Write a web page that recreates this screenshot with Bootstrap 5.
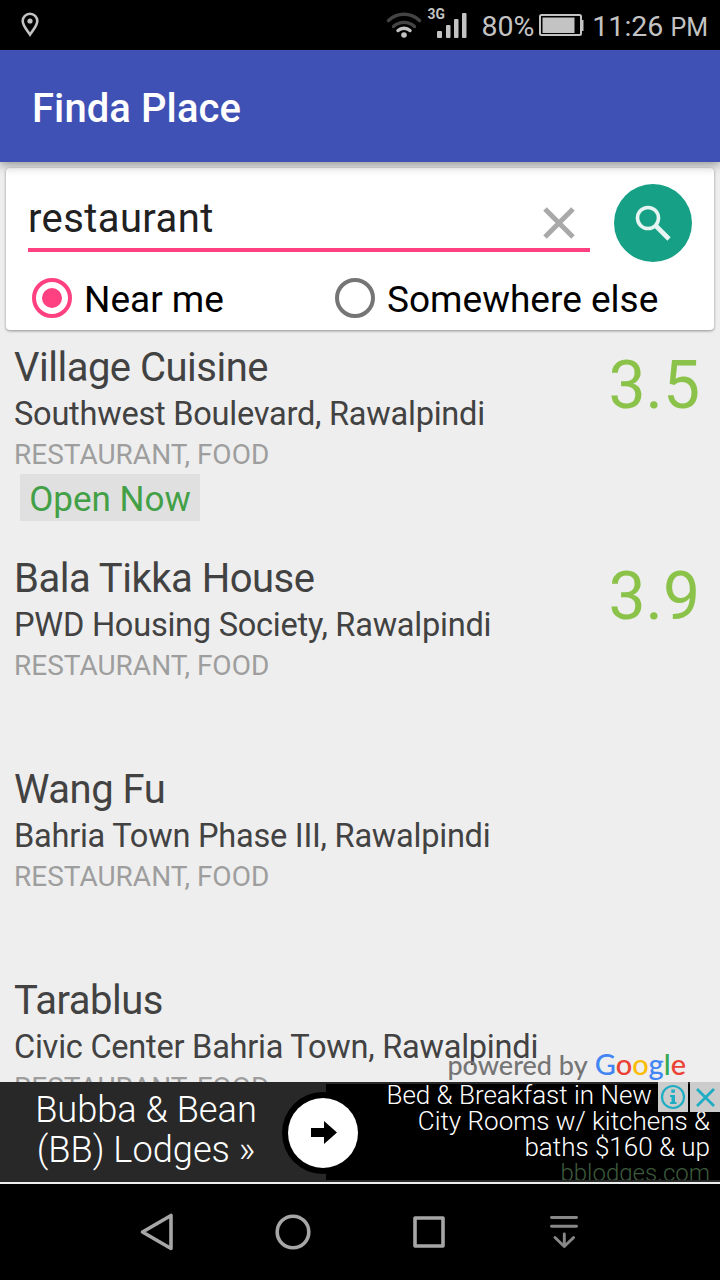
<!DOCTYPE html>
<html lang="en">
<head>
<meta charset="utf-8">
<meta name="viewport" content="width=device-width, initial-scale=1">
<title>Finda Place</title>
<link href="https://cdn.jsdelivr.net/npm/bootstrap@5.3.0/dist/css/bootstrap.min.css" rel="stylesheet">
<style>
  body { font-family: Roboto, "Liberation Sans", sans-serif; background: #eee; width: 720px; height: 1280px; overflow: hidden; }
  svg { display: block; flex: none; }
  .status { height: 50px; background: #000; color: #c3c3c3; padding: 0 12px 0 20px; }
  .status-text { font-size: 28.5px; line-height: 50px; padding-top: 4px; }
  .pm { font-size: 25px; }
  .appbar { height: 112px; background: #3f51b5; padding: 6px 32px 0; box-shadow: 0 3px 10px rgba(0,0,0,.38); z-index: 2; }
  .appbar h1 { font-size: 40px; font-weight: 500; line-height: 48px; letter-spacing: .08px; }
  .search-card { margin: 6px 6px 0; height: 162px; border: 0; border-radius: 4px; box-shadow: 0 1px 3px rgba(0,0,0,.4); padding: 15px 22px 0; }
  .field { width: 562px; height: 69px; border-bottom: 4px solid #ff4081; padding: 12px 13px 0 0; }
  .query { font-size: 40px; line-height: 48px; color: #212121; letter-spacing: .4px; }
  .clear { margin-top: 10px; }
  .go { width: 80px; height: 80px; margin-right: -1px; }
  .choice { font-size: 37px; line-height: 44px; color: #000; }
  .choices { margin-top: 13px; padding-left: 3px; }
  .choice-a { width: 303px; }
  .choice span { margin-left: 11px; height: 44px; line-height: 47px; }
  .results { height: 752px; padding-top: 14px; }
  .place { height: 211px; padding: 0 20px 0 14px; color: #424242; }
  .place-name { font-size: 40px; line-height: 48px; letter-spacing: -.5px; }
  .place-addr { font-size: 32.6px; line-height: 38px; margin-top: 3px; letter-spacing: -.26px; }
  .place-kind { font-size: 28px; line-height: 33px; margin-top: 5px; color: #9e9e9e; }
  .open-tag { width: 180px; height: 47px; line-height: 51px; font-size: 35px; margin: 3px 0 0 6px; background: #e0e0e0; color: #43a047; }
  .score { font-size: 66px; line-height: 78px; color: #8bc34a; padding-top: 3px; }
  .credit { right: 34px; bottom: 2px; font: 500 27px/30px Lato, sans-serif; color: #757575; gap: 7px; }
  .goog { font-size: 29px; }
  .ad { height: 100px; background: #282828; color: #fff; font-weight: 300; }
  .ad-name { width: 292px; font-size: 36.2px; line-height: 40px; padding-top: 8px; }
  .ad-side { width: 394px; height: 96px; margin-top: 2px; background: #000; padding: 0 10px 0 0; font-size: 26px; line-height: 26px; }
  .ad-side > div { position: relative; top: -2px; }
  .ad-first { padding-right: 58px; }
  .ad-url { color: #3c5a3c; font-size: 24px; }
  .ad-arrow { left: 282px; top: 10px; }
  .ad-marks { right: 0; top: 0; gap: 2px; }
  .split-line { height: 2px; background: #eee; }
  .navkeys { height: 96px; background: #000; }
</style>
</head>
<body class="m-0 d-flex flex-column">
<header class="status d-flex align-items-center flex-shrink-0">
  <svg width="20" height="26" viewBox="0 0 20 26" fill="none" stroke="#c3c3c3" stroke-width="2.6"><path d="M10 22.5C7.5 18.5 2.7 13.8 2.7 9a7.3 7.3 0 0 1 14.600 0c0 4.800-4.800 9.500-7.300 13.500z"/><circle cx="10" cy="9" r="2.600" fill="#c3c3c3" stroke="none"/></svg>
  <div class="ms-auto d-flex align-items-center">
    <svg width="82" height="50" viewBox="383 0 82 50" overflow="visible" fill="none" stroke-linecap="round" stroke-width="3.400"><path d="M388.500 20.500a22.500 22.500 0 0 1 31 0M393.500 26.500a15.500 15.500 0 0 1 21 0" stroke="#444"/><path d="M398 30.500a9 9 0 0 1 12 0" stroke="#c3c3c3"/><circle cx="404" cy="35" r="2.800" fill="#c3c3c3"/><g fill="#c3c3c3"><rect x="437" y="31" width="5" height="7" rx="1"/><rect x="446" y="25" width="4.500" height="13" rx="1"/><rect x="454" y="19" width="4.500" height="19" rx="1"/><rect x="462" y="13" width="4.500" height="25" rx="1"/></g><text x="427.500" y="18.500" font-size="13.800" font-weight="700" fill="#c3c3c3">3G</text></svg>
    <span class="status-text ps-3">80%</span>
    <svg class="ms-1" width="46" height="24" viewBox="0 0 46 24"><rect x="2" y="2" width="41" height="20" rx="1.500" fill="none" stroke="#c3c3c3" stroke-width="2"/><rect x="4.500" y="4.500" width="32" height="15.500" fill="#c3c3c3"/><path d="M43 7h2.500v11h-2.500z" fill="#c3c3c3"/></svg>
    <span class="status-text ms-2">11:26 <span class="pm">PM</span></span>
  </div>
</header>
<nav class="appbar d-flex align-items-center flex-shrink-0 position-relative"><h1 class="m-0 text-white">Finda Place</h1></nav>
<section class="search-card card flex-shrink-0">
  <div class="d-flex justify-content-between">
    <div class="field d-flex align-items-start">
      <span class="query flex-grow-1">restaurant</span>
      <svg class="clear" width="36" height="36" viewBox="0 0 36 36" stroke="#a9a9a9" stroke-width="5"><path d="M4 4l28 28M32 4L4 32"/></svg>
    </div>
    <svg class="go" viewBox="0 0 80 80"><circle cx="40" cy="40" r="39" fill="#16a085"/><g fill="none" stroke="#e6f5f2"><circle cx="35" cy="35" r="10.500" stroke-width="3.600"/><path d="M43 43l13 13" stroke-width="4.600"/></g></svg>
  </div>
  <div class="choices d-flex">
    <div class="choice choice-a d-flex align-items-center"><svg width="42" height="42" viewBox="0 0 42 42"><circle cx="21" cy="21" r="18" fill="none" stroke="#ff4081" stroke-width="4"/><circle cx="21" cy="21" r="10" fill="#ff4081"/></svg><span>Near me</span></div>
    <div class="choice d-flex align-items-center"><svg width="42" height="42" viewBox="0 0 42 42"><circle cx="21" cy="21" r="18" fill="none" stroke="#757575" stroke-width="4"/></svg><span>Somewhere else</span></div>
  </div>
</section>
<main class="results flex-shrink-0 overflow-hidden position-relative">
  <article class="place d-flex justify-content-between"><div><div class="place-name">Village Cuisine</div><div class="place-addr">Southwest Boulevard, Rawalpindi</div><div class="place-kind">RESTAURANT, FOOD</div><div class="open-tag text-center">Open Now</div></div><div class="score">3.5</div></article>
  <article class="place d-flex justify-content-between"><div><div class="place-name">Bala Tikka House</div><div class="place-addr">PWD Housing Society, Rawalpindi</div><div class="place-kind">RESTAURANT, FOOD</div></div><div class="score">3.9</div></article>
  <article class="place"><div class="place-name">Wang Fu</div><div class="place-addr">Bahria Town Phase III, Rawalpindi</div><div class="place-kind">RESTAURANT, FOOD</div></article>
  <article class="place"><div class="place-name">Tarablus</div><div class="place-addr">Civic Center Bahria Town, Rawalpindi</div><div class="place-kind">RESTAURANT, FOOD</div></article>
  <div class="credit position-absolute d-flex align-items-baseline"><span>powered by</span><span class="goog"><span style="color:#4285f4">G</span><span style="color:#ea4335">o</span><span style="color:#fbbc05">o</span><span style="color:#4285f4">g</span><span style="color:#34a853">l</span><span style="color:#ea4335">e</span></span></div>
</main>
<aside class="ad d-flex justify-content-between flex-shrink-0 position-relative overflow-hidden">
  <div class="ad-name text-center text-nowrap">Bubba &amp; Bean<br>(BB) Lodges »</div>
  <div class="ad-side text-end overflow-hidden text-nowrap"><div class="ad-first">Bed &amp; Breakfast in New</div><div>City Rooms w/ kitchens &amp;</div><div>baths $160 &amp; up</div><div class="ad-url">bblodges.com</div></div>
  <svg class="ad-arrow position-absolute" width="82" height="82" viewBox="0 0 82 82"><circle cx="41" cy="41" r="41" fill="#000"/><circle cx="41" cy="41" r="35" fill="#fff"/><path d="M29 36h13v-7l13 11.500-13 11.500v-7H29z"/></svg>
  <div class="ad-marks position-absolute d-flex">
    <svg width="30" height="30"><path d="M0 0h30v30H0z" fill="#ccc"/><circle cx="15" cy="15" r="11" fill="none" stroke="#1fadc4" stroke-width="2.200"/><path d="M13.300 7.500h3.600v3.300h-3.600zM12 13h5v7h1.500v2h-6.500v-2h1.500v-5H12z" fill="#1fadc4"/></svg>
    <svg width="30" height="30"><path d="M0 0h30v30H0z" fill="#ccc"/><path d="M7 7l17 17M24 7L7 24" stroke="#1fadc4" stroke-width="2.800"/></svg>
  </div>
</aside>
<div class="split-line flex-shrink-0"></div>
<footer class="navkeys flex-shrink-0">
  <svg width="720" height="96" viewBox="0 1184 720 96" fill="none" stroke="#a6a6a6" stroke-width="3.600" stroke-linejoin="round" stroke-linecap="round"><path d="M142.500 1232l28.500-16.500v33z"/><circle cx="293" cy="1232" r="15.800"/><rect x="415" y="1218" width="28" height="28"/><path d="M551.500 1217.500h25M551.500 1226.300h25M564.300 1234v12.500M555 1237.500l9.300 9 9.300-9" stroke="#888" stroke-width="2.900"/></svg>
</footer>
<script src="https://cdn.jsdelivr.net/npm/bootstrap@5.3.0/dist/js/bootstrap.bundle.min.js"></script>
</body>
</html>
